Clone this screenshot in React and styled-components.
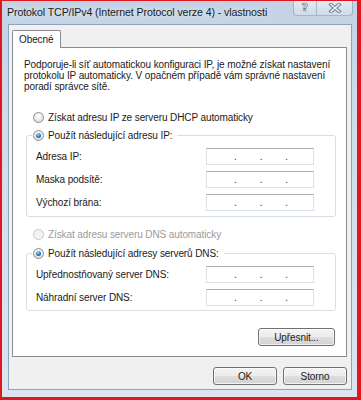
import React from "react";
import styled, {createGlobalStyle, css} from "styled-components";

const GlobalStyle = createGlobalStyle`
  html, body {
    margin: 0;
    padding: 0;
    background: #ffffff;
  }
  body {
    font-family: "Liberation Sans", Arial, sans-serif;
    font-size: 10px;
    letter-spacing: -0.1px;
    color: #1a1a1a;
  }
`;

const Frame = styled.div`
  width: 361px;
  height: 400px;
  box-sizing: border-box;
  border-style: solid;
  border-color: #e3161e;
  border-width: 1px 4px 3px 2px;
  display: flex;
`;

const Window = styled.div`
  flex: 1;
  display: flex;
  flex-direction: column;
  background: linear-gradient(180deg, #c3d3e5 0%, #cfdcea 30%, #dbe5f0 100%);
`;

const TitleBar = styled.div`
  height: 23px;
  display: flex;
  align-items: flex-start;
  padding: 0 4px 0 5px;
`;

const Title = styled.div`
  font-size: 10.6px;
  line-height: 23px;
  color: #1b1b1b;
  text-shadow: 0 0 6px rgba(255, 255, 255, 0.9);
  white-space: nowrap;
`;

const Caption = styled.div`
  margin-left: auto;
  display: flex;
  height: 14px;
  border: 1px solid rgba(95, 115, 140, 0.45);
  border-top: none;
  border-radius: 0 0 4px 4px;
  overflow: hidden;
  background: linear-gradient(180deg, rgba(255, 255, 255, 0.55), rgba(225, 233, 242, 0.35));
`;

const CaptionButton = styled.div`
  width: ${p => p.$w}px;
  display: flex;
  align-items: center;
  justify-content: center;
  border-left: ${p => (p.$first ? "none" : "1px solid rgba(95, 115, 140, 0.4)")};
`;

const HelpGlyph = styled.span`
  font-family: "DejaVu Sans", sans-serif;
  font-weight: bold;
  font-size: 11px;
  line-height: 12px;
  color: #eef2f6;
  -webkit-text-stroke: 0.7px #6d7c8d;
`;

const Client = styled.div`
  flex: 1;
  display: flex;
  flex-direction: column;
  margin: 0 5px 7px 6px;
  padding: 5px 4px 4px 3px;
  background: #f0f0f0;
  border: 1px solid #8fa4bb;
`;

const TabStrip = styled.div`
  display: flex;
  margin-bottom: -1px;
  position: relative;
  z-index: 1;
`;

const Tab = styled.div`
  height: 18px;
  box-sizing: border-box;
  padding: 0 7px 0 6px;
  background: #ffffff;
  border: 1px solid #898c95;
  border-bottom: none;
  border-radius: 2px 2px 0 0;
  line-height: 17px;
`;

const Panel = styled.div`
  flex: 1;
  display: flex;
  flex-direction: column;
  background: #ffffff;
  border: 1px solid #898c95;
  padding: 11px 0 0 11px;
`;

const Description = styled.p`
  margin: 0;
  line-height: 11px;
`;

const RadioRow = styled.div`
  display: flex;
  align-items: center;
  gap: 4px;
  height: 14px;
  margin-top: ${p => p.$top || 0}px;
  padding-left: ${p => p.$indent || 0}px;
  color: ${p => (p.$disabled ? "#9a9a9a" : "#1a1a1a")};
`;

const Radio = styled.span`
  position: relative;
  width: 11px;
  height: 11px;
  box-sizing: border-box;
  border-radius: 50%;
  border: 1px solid ${p => (p.$disabled ? "#c8c8c8" : "#8e8f8f")};
  background: ${p =>
    p.$disabled
      ? "#f3f3f3"
      : "radial-gradient(circle at 50% 35%, #ffffff 0%, #ececec 50%, #cfcfcf 100%)"};
  ${p =>
    p.$checked &&
    css`
      &::after {
        content: "";
        position: absolute;
        left: 2px;
        top: 2px;
        width: 5px;
        height: 5px;
        border-radius: 50%;
        background: radial-gradient(circle at 40% 30%, #a8dcf8 0%, #3b86c4 45%, #1c4676 100%);
      }
    `}
`;

const GroupBox = styled.fieldset`
  margin: ${p => p.$top}px 10px 0 2px;
  padding: 6px 21px ${p => p.$bottom}px 9px;
  border: 1px solid #d5dfe5;
  border-radius: 3px;
  display: flex;
  flex-direction: column;
  gap: 6px;
`;

const Legend = styled.legend`
  padding: 0 5px 0 1px;
  margin-left: -4px;
`;

const FieldRow = styled.div`
  display: flex;
  align-items: center;
  justify-content: space-between;
  height: 17px;
`;

const IpBox = styled.div`
  width: 108px;
  height: 17px;
  box-sizing: border-box;
  border: 1px solid #dde2e8;
  border-top-color: #abadb3;
  background: #ffffff;
  display: flex;
  justify-content: center;
  gap: 23px;
  padding-left: 2px;
  line-height: 15px;
  color: #333333;
`;

const Button = styled.button`
  width: ${p => p.$w}px;
  height: 18px;
  padding: 0;
  font-family: "Liberation Sans", Arial, sans-serif;
  font-size: 10px;
  letter-spacing: -0.1px;
  color: #1a1a1a;
  border: 1px solid #707070;
  border-radius: 3px;
  background: linear-gradient(180deg, #f4f4f4 0%, #ececec 48%, #dedede 52%, #d2d2d2 100%);
  box-shadow: inset 0 0 0 1px rgba(255, 255, 255, 0.7);
`;

const AdvancedButton = styled(Button)`
  align-self: flex-end;
  margin: 17px 11px 0 0;
`;

const ButtonRow = styled.div`
  display: flex;
  justify-content: flex-end;
  gap: 6px;
  margin-top: 10px;
`;

const CloseIcon = () => (
  <svg width="14" height="10" viewBox="0 0 14 10">
    <path d="M3 1.5 L11 8.5 M11 1.5 L3 8.5" stroke="#6d7c8d" strokeWidth="3.6" strokeLinecap="square"/>
    <path d="M3 1.5 L11 8.5 M11 1.5 L3 8.5" stroke="#eef2f6" strokeWidth="1.6" strokeLinecap="square"/>
  </svg>
);

const IpField = ({label}) => (
  <FieldRow>
    <span>{label}</span>
    <IpBox>
      <span>.</span>
      <span>.</span>
      <span>.</span>
    </IpBox>
  </FieldRow>
);

const App = () => {
  return (
    <>
      <GlobalStyle/>
      <Frame>
        <Window>
          <TitleBar>
            <Title>Protokol TCP/IPv4 (Internet Protocol verze 4) - vlastnosti</Title>
            <Caption>
              <CaptionButton $w={22} $first><HelpGlyph>?</HelpGlyph></CaptionButton>
              <CaptionButton $w={35}><CloseIcon/></CaptionButton>
            </Caption>
          </TitleBar>
          <Client>
            <TabStrip>
              <Tab>Obecné</Tab>
            </TabStrip>
            <Panel>
              <Description>
                Podporuje-li síť automatickou konfiguraci IP, je možné získat nastavení
                protokolu IP automaticky. V opačném případě vám správné nastavení
                poradí správce sítě.
              </Description>

              <RadioRow $top={18} $indent={9}>
                <Radio/>
                <span>Získat adresu IP ze serveru DHCP automaticky</span>
              </RadioRow>

              <GroupBox $top={4} $bottom={5}>
                <Legend>
                  <RadioRow>
                    <Radio $checked/>
                    <span>Použít následující adresu IP:</span>
                  </RadioRow>
                </Legend>
                <IpField label="Adresa IP:"/>
                <IpField label="Maska podsítě:"/>
                <IpField label="Výchozí brána:"/>
              </GroupBox>

              <RadioRow $top={10} $indent={9} $disabled>
                <Radio $disabled/>
                <span>Získat adresu serveru DNS automaticky</span>
              </RadioRow>

              <GroupBox $top={5} $bottom={4}>
                <Legend>
                  <RadioRow>
                    <Radio $checked/>
                    <span>Použít následující adresy serverů DNS:</span>
                  </RadioRow>
                </Legend>
                <IpField label="Upřednostňovaný server DNS:"/>
                <IpField label="Náhradní server DNS:"/>
              </GroupBox>

              <AdvancedButton $w={77}>Upřesnit...</AdvancedButton>
            </Panel>
            <ButtonRow>
              <Button $w={64}>OK</Button>
              <Button $w={64}>Storno</Button>
            </ButtonRow>
          </Client>
        </Window>
      </Frame>
    </>
  );
};

export default App;
